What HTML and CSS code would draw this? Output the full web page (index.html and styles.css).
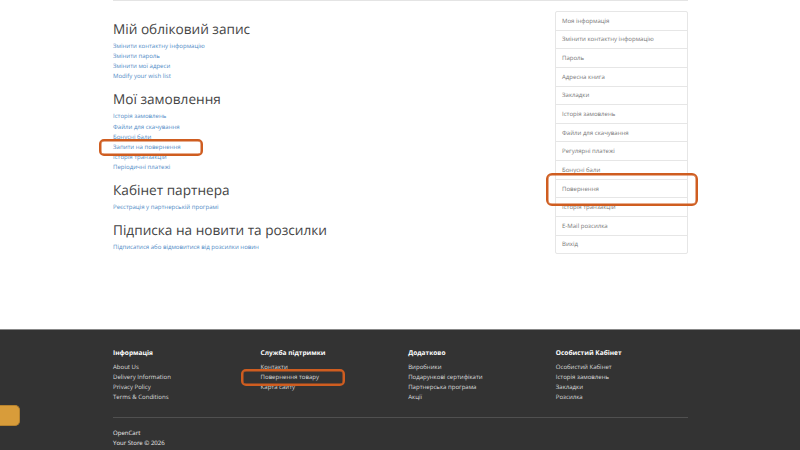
FILE: index.html
```html
<!DOCTYPE html>
<html lang="uk">
<head>
    <meta charset="UTF-8">
    <meta name="viewport" content="width=device-width, initial-scale=1.0">
    <title>Мій обліковий запис</title>
    <link rel="stylesheet" href="styles.css">
</head>
<body>
    <main class="container account">
        <div class="content">
            <h2>Мій обліковий запис</h2>
            <ul class="links">
                <li><a href="#">Змінити контактну інформацію</a></li>
                <li><a href="#">Змінити пароль</a></li>
                <li><a href="#">Змінити мої адреси</a></li>
                <li><a href="#">Modify your wish list</a></li>
            </ul>
            <h2>Мої замовлення</h2>
            <ul class="links">
                <li><a href="#">Історія замовлень</a></li>
                <li><a href="#">Файли для скачування</a></li>
                <li><a href="#">Бонусні бали</a></li>
                <li class="marked mark-order"><a href="#">Запити на повернення</a></li>
                <li><a href="#">Історія транзакцій</a></li>
                <li><a href="#">Періодичні платежі</a></li>
            </ul>
            <h2>Кабінет партнера</h2>
            <ul class="links">
                <li><a href="#">Реєстрація у партнерській програмі</a></li>
            </ul>
            <h2>Підписка на новити та розсилки</h2>
            <ul class="links">
                <li><a href="#">Підписатися або відмовитися від розсилки новин</a></li>
            </ul>
        </div>
        <aside class="list-group">
            <a href="#">Моя інформація</a>
            <a href="#">Змінити контактну інформацію</a>
            <a href="#">Пароль</a>
            <a href="#">Адресна книга</a>
            <a href="#">Закладки</a>
            <a href="#">Історія замовлень</a>
            <a href="#">Файли для скачування</a>
            <a href="#">Регулярні платежі</a>
            <a href="#">Бонусні бали</a>
            <a href="#" class="marked mark-menu">Повернення</a>
            <a href="#">Історія транзакцій</a>
            <a href="#">E-Mail розсилка</a>
            <a href="#">Вихід</a>
        </aside>
    </main>

    <footer>
        <div class="container">
            <div class="footer-row">
                <div class="footer-col">
                    <h5>Інформація</h5>
                    <ul>
                        <li><a href="#">About Us</a></li>
                        <li><a href="#">Delivery Information</a></li>
                        <li><a href="#">Privacy Policy</a></li>
                        <li><a href="#">Terms &amp; Conditions</a></li>
                    </ul>
                </div>
                <div class="footer-col">
                    <h5>Служба підтримки</h5>
                    <ul>
                        <li><a href="#">Контакти</a></li>
                        <li class="marked mark-footer"><a href="#">Повернення товару</a></li>
                        <li><a href="#">Карта сайту</a></li>
                    </ul>
                </div>
                <div class="footer-col">
                    <h5>Додатково</h5>
                    <ul>
                        <li><a href="#">Виробники</a></li>
                        <li><a href="#">Подарункові сертифікати</a></li>
                        <li><a href="#">Партнерська програма</a></li>
                        <li><a href="#">Акції</a></li>
                    </ul>
                </div>
                <div class="footer-col">
                    <h5>Особистий Кабінет</h5>
                    <ul>
                        <li><a href="#">Особистий Кабінет</a></li>
                        <li><a href="#">Історія замовлень</a></li>
                        <li><a href="#">Закладки</a></li>
                        <li><a href="#">Розсилка</a></li>
                    </ul>
                </div>
            </div>
            <hr>
            <p>OpenCart<br>Your Store © 2026</p>
        </div>
    </footer>
    <div class="side-tab"></div>
</body>
</html>
```
FILE: styles.css
```css
*,
*::after {
    box-sizing: border-box;
    margin: 0;
    padding: 0;
}

body {
    height: 450px;
    overflow: hidden;
    background-color: #fff;
    color: #666;
    font-family: "Open Sans", sans-serif;
    font-size: 6.06px;
    line-height: 10.1px;
    text-rendering: geometricPrecision;
}

a {
    color: inherit;
    text-decoration: none;
}

ul {
    list-style: none;
}

.container {
    width: 575px;
    margin-left: 113px;
}

/* account page */
.account {
    display: flex;
    justify-content: space-between;
    align-items: flex-start;
    height: 329px;
    border-top: 1px solid #e4e4e4;
}

.content {
    padding-top: 20px;
}

.content h2 {
    margin-bottom: 5px;
    color: #444;
    font-size: 13.63px;
    font-weight: 400;
    line-height: 15px;
}

.links {
    margin-bottom: 10.1px;
    color: #4f8bc6;
}

.list-group {
    width: 133px;
    margin-top: 10px;
    border: 1px solid #e6e6e6;
    border-radius: 2px;
}

.list-group a {
    display: block;
    height: 18.65px;
    padding: 3.8px 6px;
    border-bottom: 1px solid #e6e6e6;
    color: #777;
}

.list-group a:last-child {
    height: 17.7px;
    border-bottom: none;
}

/* orange outlines over the return links */
.marked {
    position: relative;
}

.marked::after {
    content: "";
    position: absolute;
    border: 2px solid #cf5d20;
    border-radius: 5px;
    box-shadow: inset 0 0 0 0.5px #cf5d20;
}

.mark-order::after {
    top: -3px;
    left: -14px;
    width: 104px;
    height: 17px;
}

.mark-menu::after {
    top: -7px;
    left: -10px;
    width: 152px;
    height: 33px;
    border-radius: 6px;
}

.mark-footer::after {
    top: -3px;
    left: -20px;
    width: 104px;
    height: 17px;
}

/* footer */
footer {
    height: 121px;
    padding-top: 19px;
    border-top: 1px solid #888;
    background-color: #333;
    color: #eee;
}

.footer-row {
    display: flex;
}

.footer-col {
    width: 147.6px;
    flex-shrink: 0;
}

.footer-col:last-child {
    width: 132px;
}

.footer-col h5 {
    margin-bottom: 5px;
    color: #fff;
    font-size: 6.56px;
    font-weight: 700;
    line-height: 8px;
}

.footer-col ul {
    height: 55px;
    color: #ddd;
}

footer hr {
    border: none;
    border-top: 1px solid #505050;
    margin-bottom: 10.4px;
}

.side-tab {
    position: absolute;
    top: 405px;
    left: 0;
    width: 20px;
    height: 21px;
    border: 1px solid #b5822f;
    border-left: none;
    border-radius: 0 5px 5px 0;
    background-color: #d89c3a;
}
```
